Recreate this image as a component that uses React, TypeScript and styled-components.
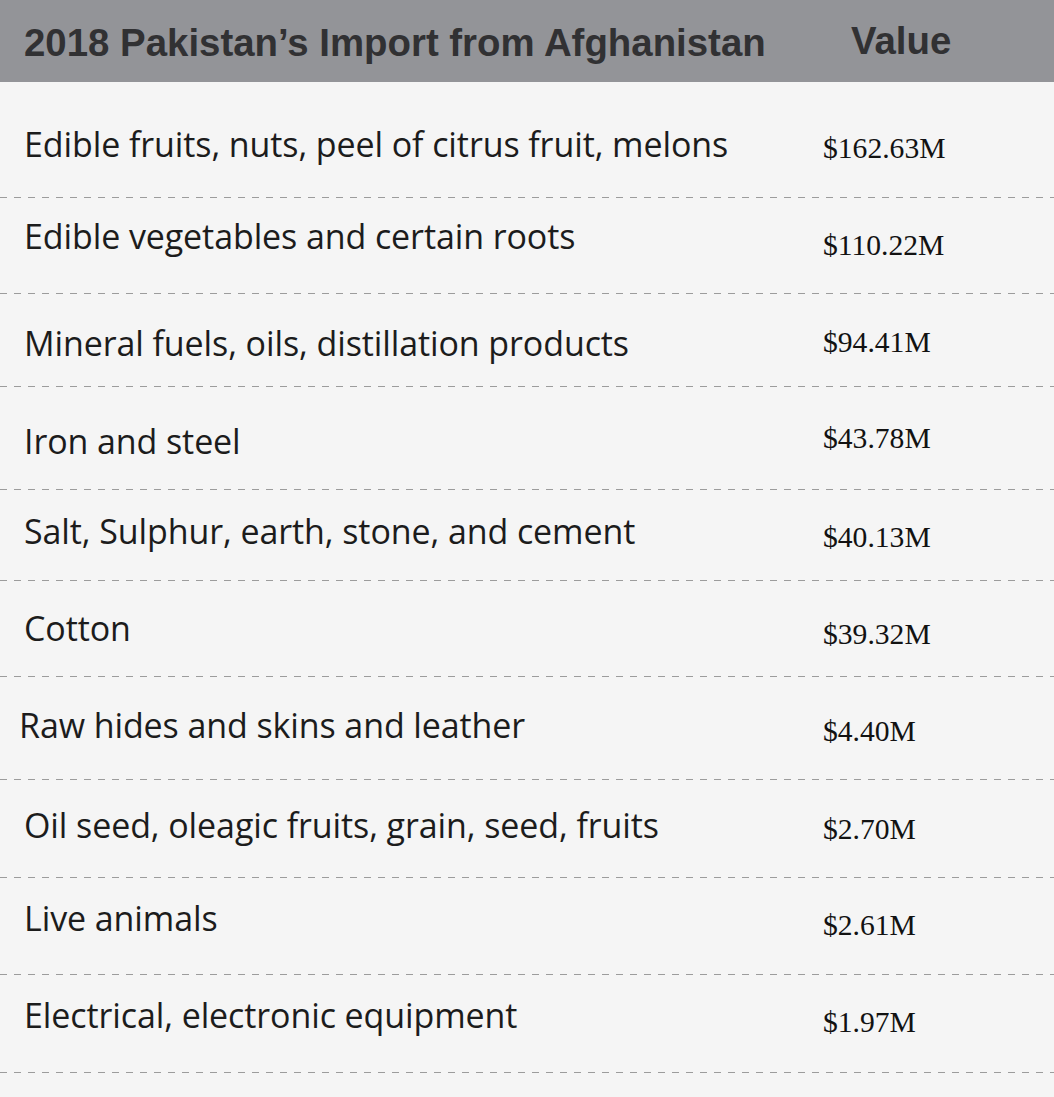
import React from "react";
import styled, { createGlobalStyle } from "styled-components";

const GlobalStyle = createGlobalStyle`
  html, body {
    margin: 0;
    padding: 0;
    background: #f5f5f5;
  }
  * { box-sizing: border-box; }
`;

const Page = styled.div`
  width: 1054px;
  height: 1097px;
  background: #f5f5f5;
  overflow: hidden;
`;

const Header = styled.div`
  height: 82px;
  background: #939498;
  display: grid;
  grid-template-columns: 827px 1fr;
  align-items: start;
  color: #313133;
  font-family: "Liberation Sans", Arial, sans-serif;
  font-weight: 700;
  font-size: 38.4px;
  line-height: 42px;
`;

const HeaderCell = styled.div<{ $top: number; $left: number }>`
  padding-top: ${(p) => p.$top}px;
  padding-left: ${(p) => p.$left}px;
  white-space: nowrap;
`;

const Row = styled.div<{ $height: number }>`
  height: ${(p) => p.$height}px;
  display: grid;
  grid-template-columns: 823px 1fr;
  grid-template-rows: 1fr 1px;
  align-items: start;
`;

const Label = styled.div<{ $top: number; $left: number }>`
  padding-top: ${(p) => p.$top}px;
  padding-left: ${(p) => p.$left}px;
  font-family: "Open Sans", "Noto Sans", sans-serif;
  font-size: 34px;
  line-height: 40px;
  letter-spacing: -0.1px;
  color: #1c1c1c;
  white-space: nowrap;
`;

const Value = styled.div<{ $top: number }>`
  padding-top: ${(p) => p.$top}px;
  font-family: "Liberation Serif", "Times New Roman", serif;
  font-size: 29.6px;
  line-height: 32px;
  color: #121212;
  white-space: nowrap;
`;

const Divider = styled.div`
  grid-column: 1 / -1;
  height: 1px;
  background: repeating-linear-gradient(
    to right,
    #9c9c9c 0 7px,
    transparent 7px 14px
  );
`;

type Item = {
  label: string;
  value: string;
  top: number;
  bottom: number;
  labelBase: number;
  valueBase: number;
  left?: number;
};

const items: Item[] = [
  { label: "Edible fruits, nuts, peel of citrus fruit, melons", value: "$162.63M", top: 82, bottom: 197, labelBase: 156, valueBase: 158 },
  { label: "Edible vegetables and certain roots", value: "$110.22M", top: 198, bottom: 293, labelBase: 248, valueBase: 255 },
  { label: "Mineral fuels, oils, distillation products", value: "$94.41M", top: 294, bottom: 386, labelBase: 355, valueBase: 352 },
  { label: "Iron and steel", value: "$43.78M", top: 387, bottom: 489, labelBase: 453, valueBase: 448 },
  { label: "Salt, Sulphur, earth, stone, and cement", value: "$40.13M", top: 490, bottom: 580, labelBase: 543, valueBase: 547 },
  { label: "Cotton", value: "$39.32M", top: 581, bottom: 676, labelBase: 640, valueBase: 644 },
  { label: "Raw hides and skins and leather", value: "$4.40M", top: 677, bottom: 779, labelBase: 737, valueBase: 741, left: 19 },
  { label: "Oil seed, oleagic fruits, grain, seed, fruits", value: "$2.70M", top: 780, bottom: 877, labelBase: 837, valueBase: 839 },
  { label: "Live animals", value: "$2.61M", top: 878, bottom: 974, labelBase: 930, valueBase: 935 },
  { label: "Electrical, electronic equipment", value: "$1.97M", top: 975, bottom: 1072, labelBase: 1027, valueBase: 1032 },
];

// distance from the top of each line box to its baseline
const LABEL_BASELINE = 32;
const VALUE_BASELINE = 26;

export default function App() {
  return (
    <Page>
      <GlobalStyle />
      <Header>
        <HeaderCell $top={22} $left={24}>
          2018 Pakistan’s Import from Afghanistan
        </HeaderCell>
        <HeaderCell $top={20} $left={24}>
          Value
        </HeaderCell>
      </Header>
      {items.map((it) => (
        <Row key={it.label} $height={it.bottom - it.top + 1}>
          <Label $top={it.labelBase - it.top - LABEL_BASELINE} $left={it.left ?? 24}>
            {it.label}
          </Label>
          <Value $top={it.valueBase - it.top - VALUE_BASELINE}>{it.value}</Value>
          <Divider />
        </Row>
      ))}
    </Page>
  );
}
